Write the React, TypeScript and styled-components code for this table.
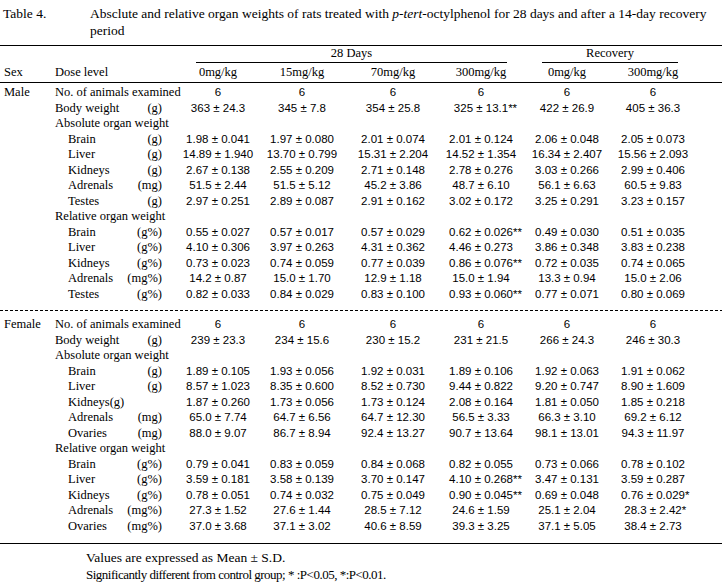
import React from "react";
import styled, { createGlobalStyle } from "styled-components";

const Global = createGlobalStyle`
  html, body { margin: 0; padding: 0; background: #fff; }
  body { font-family: "Liberation Serif", "Times New Roman", serif; color: #000; }
`;

const COLS = "55px 125px 76px 92px 90px 86px 86px 86px 1fr";

const Page = styled.div`
  width: 722px;
  font-size: 12.5px;
  color: #000;
`;

const TitleBlock = styled.div`
  display: flex;
  padding-top: 5px;
  line-height: 17px;
  font-size: 13.5px;
`;

const TitleLabel = styled.div`
  width: 87px;
  padding-left: 3px;
  flex: none;
`;

const TitleText = styled.div`
  flex: 1;
  white-space: nowrap;
`;

const Table = styled.div`
  margin-top: 6px;
  border-top: 1px solid #000;
`;

const GroupRow = styled.div`
  display: grid;
  grid-template-columns: 196px 311px 35px 136px 1fr;
  height: 17px;
  line-height: 15px;
`;

const GroupTitle = styled.div<{ $col: number }>`
  grid-column: ${(p) => p.$col};
  text-align: center;
  border-bottom: 1px solid #000;
`;

const HeadRow = styled.div`
  display: grid;
  grid-template-columns: ${COLS};
  height: 19px;
  line-height: 19px;
  border-bottom: 1px solid #000;
`;

const HeadCell = styled.div<{ $col: number }>`
  grid-column: ${(p) => p.$col};
  text-align: center;
  white-space: nowrap;
`;

const DoseHead = styled.div`
  grid-column: 2;
  white-space: nowrap;
`;

const SexCell = styled.div`
  grid-column: 1;
  padding-left: 4px;
  white-space: nowrap;
`;

const Block = styled.div<{ $top: number; $bottom: number }>`
  padding-top: ${(p) => p.$top}px;
  padding-bottom: ${(p) => p.$bottom}px;
`;

const DashedRule = styled.div`
  height: 1px;
  background: repeating-linear-gradient(to right, #000 0 3px, transparent 3px 5px);
`;

const SolidRule = styled.div`
  height: 1px;
  background: #000;
`;

const Row = styled.div`
  display: grid;
  grid-template-columns: ${COLS};
  height: 15.5px;
  line-height: 15.5px;
  white-space: nowrap;
`;

const LabelCell = styled.div<{ $indent: number }>`
  grid-column: 2;
  display: flex;
  padding-left: ${(p) => p.$indent}px;
  padding-right: 18px;
`;

const LabelName = styled.span`
  flex: 1;
`;

const Unit = styled.span`
  flex: none;
`;

const ValueCell = styled.div<{ $col: number }>`
  grid-column: ${(p) => p.$col};
  text-align: center;
  font-family: "Liberation Sans", Arial, sans-serif;
  font-size: 11.5px;
`;

const Sig = styled.span`
  display: inline-block;
  width: 0;
  overflow: visible;
  white-space: nowrap;
`;

const Notes = styled.div`
  padding: 5px 0 0 86px;
  line-height: 17px;
  font-size: 13.5px;
  white-space: nowrap;
`;

const NoteLine = styled.div<{ $tight?: boolean }>`
  ${(p) => (p.$tight ? "font-size: 13px; letter-spacing: -0.5px;" : "")}
`;

type DataRow = {
  label: string;
  unit?: string;
  indent: number;
  values?: string[];
};

const VALUE_COLS = [3, 4, 5, 6, 7, 8];

const male: DataRow[] = [
  { label: "No. of animals examined", indent: 0, values: ["6", "6", "6", "6", "6", "6"] },
  { label: "Body weight", unit: "(g)", indent: 0, values: ["363 ± 24.3", "345 ± 7.8", "354 ± 25.8", "325 ± 13.1**", "422 ± 26.9", "405 ± 36.3"] },
  { label: "Absolute organ weight", indent: 0 },
  { label: "Brain", unit: "(g)", indent: 13, values: ["1.98 ± 0.041", "1.97 ± 0.080", "2.01 ± 0.074", "2.01 ± 0.124", "2.06 ± 0.048", "2.05 ± 0.073"] },
  { label: "Liver", unit: "(g)", indent: 13, values: ["14.89 ± 1.940", "13.70 ± 0.799", "15.31 ± 2.204", "14.52 ± 1.354", "16.34 ± 2.407", "15.56 ± 2.093"] },
  { label: "Kidneys", unit: "(g)", indent: 13, values: ["2.67 ± 0.138", "2.55 ± 0.209", "2.71 ± 0.148", "2.78 ± 0.276", "3.03 ± 0.266", "2.99 ± 0.406"] },
  { label: "Adrenals", unit: "(mg)", indent: 13, values: ["51.5 ± 2.44", "51.5 ± 5.12", "45.2 ± 3.86", "48.7 ± 6.10", "56.1 ± 6.63", "60.5 ± 9.83"] },
  { label: "Testes", unit: "(g)", indent: 13, values: ["2.97 ± 0.251", "2.89 ± 0.087", "2.91 ± 0.162", "3.02 ± 0.172", "3.25 ± 0.291", "3.23 ± 0.157"] },
  { label: "Relative organ weight", indent: 0 },
  { label: "Brain", unit: "(g%)", indent: 13, values: ["0.55 ± 0.027", "0.57 ± 0.017", "0.57 ± 0.029", "0.62 ± 0.026**", "0.49 ± 0.030", "0.51 ± 0.035"] },
  { label: "Liver", unit: "(g%)", indent: 13, values: ["4.10 ± 0.306", "3.97 ± 0.263", "4.31 ± 0.362", "4.46 ± 0.273", "3.86 ± 0.348", "3.83 ± 0.238"] },
  { label: "Kidneys", unit: "(g%)", indent: 13, values: ["0.73 ± 0.023", "0.74 ± 0.059", "0.77 ± 0.039", "0.86 ± 0.076**", "0.72 ± 0.035", "0.74 ± 0.065"] },
  { label: "Adrenals", unit: "(mg%)", indent: 13, values: ["14.2 ± 0.87", "15.0 ± 1.70", "12.9 ± 1.18", "15.0 ± 1.94", "13.3 ± 0.94", "15.0 ± 2.06"] },
  { label: "Testes", unit: "(g%)", indent: 13, values: ["0.82 ± 0.033", "0.84 ± 0.029", "0.83 ± 0.100", "0.93 ± 0.060**", "0.77 ± 0.071", "0.80 ± 0.069"] },
];

const female: DataRow[] = [
  { label: "No. of animals examined", indent: 0, values: ["6", "6", "6", "6", "6", "6"] },
  { label: "Body weight", unit: "(g)", indent: 0, values: ["239 ± 23.3", "234 ± 15.6", "230 ± 15.2", "231 ± 21.5", "266 ± 24.3", "246 ± 30.3"] },
  { label: "Absolute organ weight", indent: 0 },
  { label: "Brain", unit: "(g)", indent: 13, values: ["1.89 ± 0.105", "1.93 ± 0.056", "1.92 ± 0.031", "1.89 ± 0.106", "1.92 ± 0.063", "1.91 ± 0.062"] },
  { label: "Liver", unit: "(g)", indent: 13, values: ["8.57 ± 1.023", "8.35 ± 0.600", "8.52 ± 0.730", "9.44 ± 0.822", "9.20 ± 0.747", "8.90 ± 1.609"] },
  { label: "Kidneys(g)", indent: 13, values: ["1.87 ± 0.260", "1.73 ± 0.056", "1.73 ± 0.124", "2.08 ± 0.164", "1.81 ± 0.050", "1.85 ± 0.218"] },
  { label: "Adrenals", unit: "(mg)", indent: 13, values: ["65.0 ± 7.74", "64.7 ± 6.56", "64.7 ± 12.30", "56.5 ± 3.33", "66.3 ± 3.10", "69.2 ± 6.12"] },
  { label: "Ovaries", unit: "(mg)", indent: 13, values: ["88.0 ± 9.07", "86.7 ± 8.94", "92.4 ± 13.27", "90.7 ± 13.64", "98.1 ± 13.01", "94.3 ± 11.97"] },
  { label: "Relative organ weight", indent: 0 },
  { label: "Brain", unit: "(g%)", indent: 13, values: ["0.79 ± 0.041", "0.83 ± 0.059", "0.84 ± 0.068", "0.82 ± 0.055", "0.73 ± 0.066", "0.78 ± 0.102"] },
  { label: "Liver", unit: "(g%)", indent: 13, values: ["3.59 ± 0.181", "3.58 ± 0.139", "3.70 ± 0.147", "4.10 ± 0.268**", "3.47 ± 0.131", "3.59 ± 0.287"] },
  { label: "Kidneys", unit: "(g%)", indent: 13, values: ["0.78 ± 0.051", "0.74 ± 0.032", "0.75 ± 0.049", "0.90 ± 0.045**", "0.69 ± 0.048", "0.76 ± 0.029*"] },
  { label: "Adrenals", unit: "(mg%)", indent: 13, values: ["27.3 ± 1.52", "27.6 ± 1.44", "28.5 ± 7.12", "24.6 ± 1.59", "25.1 ± 2.04", "28.3 ± 2.42*"] },
  { label: "Ovaries", unit: "(mg%)", indent: 13, values: ["37.0 ± 3.68", "37.1 ± 3.02", "40.6 ± 8.59", "39.3 ± 3.25", "37.1 ± 5.05", "38.4 ± 2.73"] },
];

function Value({ text, col }: { text: string; col: number }) {
  const m = text.match(/^(.*?)(\**)$/);
  const main = m ? m[1] : text;
  const stars = m ? m[2] : "";
  return (
    <ValueCell $col={col}>
      {main}
      {stars && <Sig>{stars}</Sig>}
    </ValueCell>
  );
}

function SexBlock({ sex, rows, top, bottom }: { sex: string; rows: DataRow[]; top: number; bottom: number }) {
  return (
    <Block $top={top} $bottom={bottom}>
      {rows.map((r, i) => (
        <Row key={i}>
          {i === 0 && <SexCell>{sex}</SexCell>}
          <LabelCell $indent={r.indent}>
            <LabelName>{r.label}</LabelName>
            {r.unit && <Unit>{r.unit}</Unit>}
          </LabelCell>
          {r.values?.map((v, j) => (
            <Value key={j} text={v} col={VALUE_COLS[j]} />
          ))}
        </Row>
      ))}
    </Block>
  );
}

export default function App() {
  return (
    <Page>
      <Global />
      <TitleBlock>
        <TitleLabel>Table 4.</TitleLabel>
        <TitleText>
          Absclute and relative organ weights of rats treated with <i>p-tert</i>-octylphenol for 28 days and after a 14-day recovery
          <br />
          period
        </TitleText>
      </TitleBlock>
      <Table>
        <GroupRow>
          <GroupTitle $col={2}>28 Days</GroupTitle>
          <GroupTitle $col={4}>Recovery</GroupTitle>
        </GroupRow>
        <HeadRow>
          <SexCell>Sex</SexCell>
          <DoseHead>Dose level</DoseHead>
          <HeadCell $col={3}>0mg/kg</HeadCell>
          <HeadCell $col={4}>15mg/kg</HeadCell>
          <HeadCell $col={5}>70mg/kg</HeadCell>
          <HeadCell $col={6}>300mg/kg</HeadCell>
          <HeadCell $col={7}>0mg/kg</HeadCell>
          <HeadCell $col={8}>300mg/kg</HeadCell>
        </HeadRow>
        <SexBlock sex="Male" rows={male} top={2} bottom={7.5} />
        <DashedRule />
        <SexBlock sex="Female" rows={female} top={6.5} bottom={8.5} />
        <SolidRule />
        <Notes>
          <NoteLine>Values are expressed as Mean ± S.D.</NoteLine>
          <NoteLine $tight>Significantly different from control group; * :P&lt;0.05, *:P&lt;0.01.</NoteLine>
        </Notes>
      </Table>
    </Page>
  );
}
